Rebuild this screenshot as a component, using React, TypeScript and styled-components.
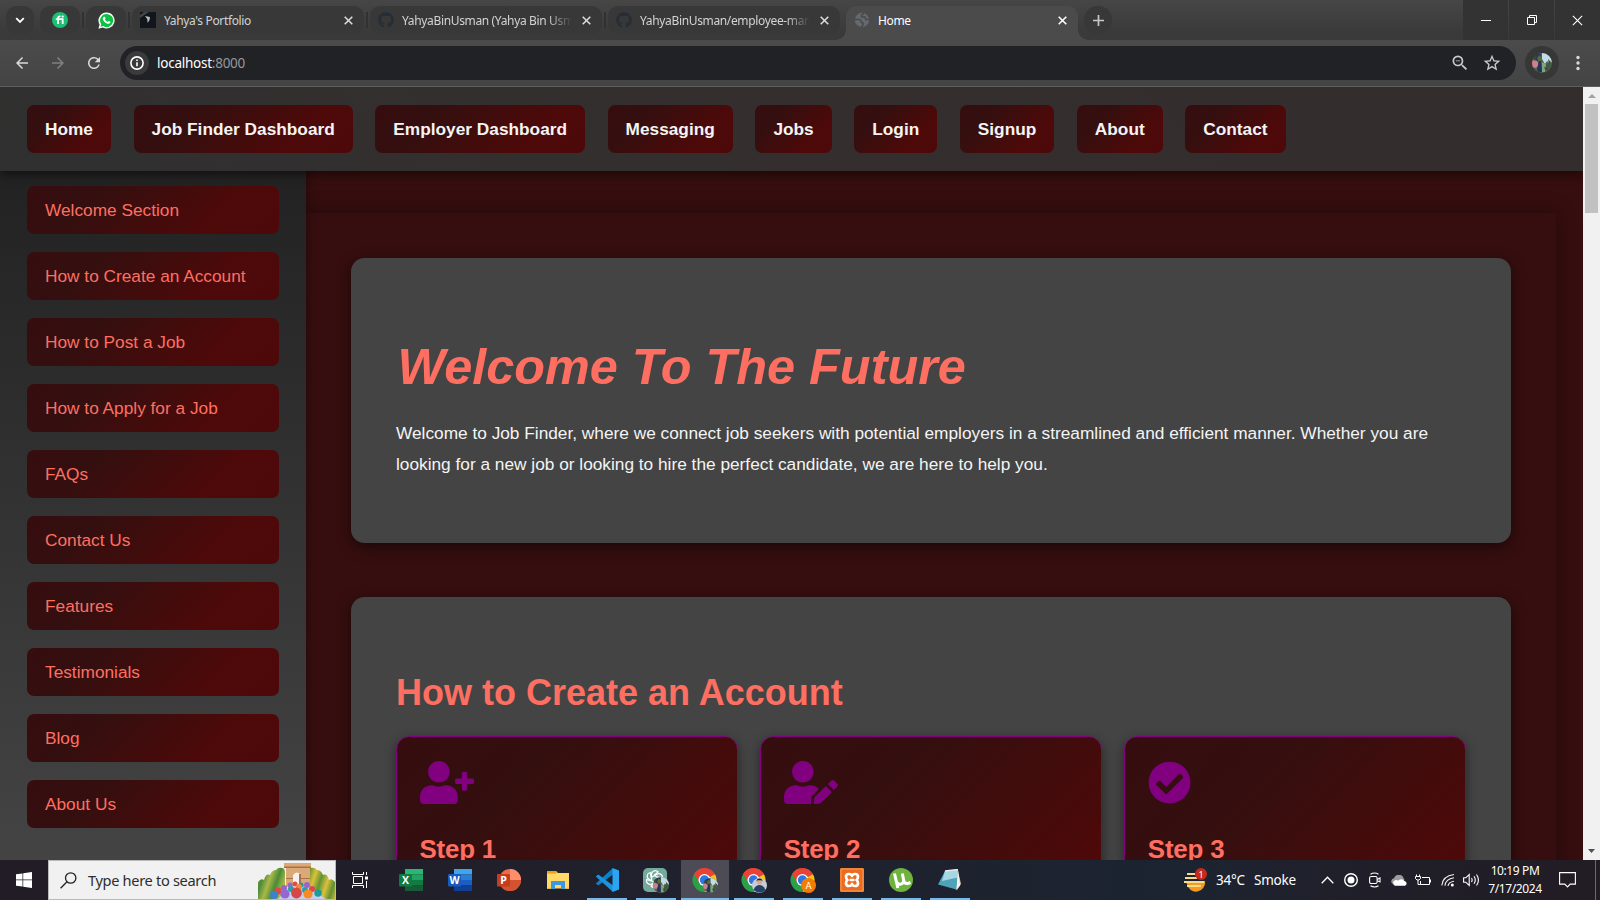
import React from "react";
import styled, { createGlobalStyle, css } from "styled-components";
import { FaUserPlus, FaUserEdit, FaCheckCircle, FaGithub } from "react-icons/fa";
import { MdOutlineStarBorder, MdRefresh, MdArrowBack, MdArrowForward, MdZoomOut } from "react-icons/md";

const ui = `"Noto Sans", "Open Sans", sans-serif`;
const page = `"Liberation Sans", Arial, sans-serif`;
const coral = "#ff6f61";
const maroon = "linear-gradient(135deg, #370d0f 0%, #340f0f 25%, #4e0909 74%, #4d090a 100%)";

const Global = createGlobalStyle`
  * { box-sizing: border-box; }
  body { margin: 0; background: #222; }
  svg { display: block; flex: none; }
`;

const Screen = styled.div`
  width: 1600px;
  height: 900px;
  overflow: hidden;
  display: flex;
  flex-direction: column;
`;

/* browser chrome */
const TabStrip = styled.div`
  height: 40px;
  flex: none;
  display: flex;
  align-items: flex-start;
  gap: 6px;
  padding: 6px 0 0 6px;
  background: linear-gradient(#464646, #3a3a3a 80%);
  font-family: ${ui};
`;
const Chip = styled.div<{ $w: number; $sep?: boolean; $round?: boolean }>`
  width: ${(p) => p.$w}px;
  height: 28px;
  border-radius: ${(p) => (p.$round ? 14 : 10)}px;
  background: #383838;
  display: flex;
  align-items: center;
  justify-content: center;
  position: relative;
  ${(p) => p.$sep && css`
    &::after {
      content: "";
      position: absolute;
      right: -4px;
      top: 6px;
      width: 2px;
      height: 16px;
      background: #313131;
    }
  `}
`;
const Tab = styled(Chip)<{ $active?: boolean }>`
  justify-content: flex-start;
  padding: 0 11.5px 0 8px;
  gap: 8px;
  ${(p) => p.$active && css`
    height: 34px;
    padding-bottom: 6px;
    background: #4b4b4b;
    border-radius: 10px 10px 0 0;
    &::before, &::after {
      content: "";
      position: absolute;
      bottom: 0;
      top: auto;
      width: 10px;
      height: 10px;
      background: radial-gradient(circle at 0 0, transparent 9.5px, #4b4b4b 10px);
      left: -10px;
    }
    &::after {
      left: auto;
      right: -10px;
      background: radial-gradient(circle at 100% 0, transparent 9.5px, #4b4b4b 10px);
    }
  `}
`;
const TabTitle = styled.span<{ $active?: boolean; $fade?: boolean }>`
  flex: 1;
  min-width: 0;
  overflow: hidden;
  white-space: nowrap;
  padding-top: 2px;
  font-size: 12px;
  line-height: 18px;
  letter-spacing: -0.35px;
  color: ${(p) => (p.$active ? "#fff" : "#d3d3d3")};
  margin-right: 2px;
  ${(p) => p.$fade && css`mask-image: linear-gradient(90deg, #000 86%, transparent);`}
`;
const WindowButtons = styled.div`
  display: flex;
  gap: 1px;
  margin: -6px 0 0 auto;
  height: 40px;
`;
const WindowButton = styled.div`
  width: 45px;
  background: #333;
  display: flex;
  align-items: center;
  justify-content: center;
`;
const Toolbar = styled.div`
  height: 47px;
  flex: none;
  display: flex;
  align-items: center;
  background: linear-gradient(#4b4b4b, #444);
  border-bottom: 1px solid #5e5e5e;
  color: #d5d5d5;
`;
const ToolButton = styled.div<{ $dim?: boolean }>`
  width: 36px;
  display: flex;
  justify-content: center;
  color: ${(p) => (p.$dim ? "#808080" : "#dadada")};
`;
const NavButtons = styled.div`
  display: flex;
  align-items: center;
  width: 120px;
  padding-left: 4px;
`;
const AddressBar = styled.div`
  width: 1396px;
  height: 34px;
  border-radius: 17px;
  background: #212226;
  display: flex;
  align-items: center;
  padding: 0 14px 0 5px;
  font-family: ${ui};
  font-size: 13.5px;
  color: #fff;
`;
const InfoBadge = styled.div`
  width: 24px;
  height: 24px;
  border-radius: 50%;
  background: #3a3a3b;
  display: flex;
  align-items: center;
  justify-content: center;
  margin-right: 8px;
`;
const Url = styled.span`
  flex: 1;
  letter-spacing: -0.25px;
  span { color: #96979a; }
`;
const AddressIcons = styled.div`
  display: flex;
  gap: 12px;
  color: #c9c9c9;
  align-items: center;
`;
const Profile = styled.div`
  width: 34px;
  height: 34px;
  margin: 0 9px 0 9px;
  border-radius: 50%;
  background: #373737;
  display: flex;
  align-items: center;
  justify-content: center;
`;

/* web page */
const Viewport = styled.div`
  height: 773px;
  flex: none;
  display: flex;
  overflow: hidden;
`;
const Page = styled.div`
  width: 1583px;
  overflow: hidden;
  background: #360e0f;
  font-family: ${page};
  font-size: 17.28px;
  display: flex;
  flex-direction: column;
`;
const Header = styled.nav`
  height: 84px;
  flex: none;
  display: flex;
  align-items: center;
  gap: 22.57px;
  padding-left: 27px;
  background: linear-gradient(45deg, #303030 0, #332f2e 35%, #332e2d);
  box-shadow: 0 4px 9px rgba(0, 0, 0, 0.45);
  position: relative;
  z-index: 2;
`;
const NavLink = styled.a`
  height: 48px;
  padding: 0 18px;
  border-radius: 7px;
  background: ${maroon};
  color: #f4f4f4;
  font-weight: bold;
  line-height: 48px;
  white-space: nowrap;
`;
const Columns = styled.div`
  flex: 1;
  min-height: 0;
  display: flex;
`;
const Sidebar = styled.aside`
  width: 306px;
  flex: none;
  display: flex;
  flex-direction: column;
  gap: 18px;
  padding: 15px 27px;
  background: linear-gradient(#222, #444);
  box-shadow: 2px 0 9px rgba(0, 0, 0, 0.3);
  position: relative;
  z-index: 1;
`;
const SideLink = styled.a`
  height: 48px;
  flex: none;
  padding-left: 18px;
  border-radius: 7px;
  background: ${maroon};
  color: ${coral};
  line-height: 48px;
`;
const Main = styled.main`
  width: 1250px;
  height: 1000px;
  margin-top: 42px;
  padding: 45px;
  display: flex;
  flex-direction: column;
  gap: 54px;
  box-shadow: 0 0 18px rgba(0, 0, 0, 0.4);
  background: #360e0f;
`;
const Section = styled.section<{ $h: number }>`
  height: ${(p) => p.$h}px;
  flex: none;
  border-radius: 13.5px;
  background: #444;
  padding: 0 45px;
  box-shadow: 0 4px 14px rgba(0, 0, 0, 0.5);
`;
const Hero = styled.h1`
  margin: 0;
  padding: 80px 0 0 1.5px;
  font-size: 50.4px;
  line-height: 58px;
  font-style: italic;
  color: ${coral};
`;
const Lead = styled.p`
  margin: 22px 0 0;
  line-height: 31.1px;
  color: #f4f4f4;
`;
const Title = styled.h2`
  margin: 0;
  padding-top: 75px;
  font-size: 36px;
  line-height: 41px;
  color: ${coral};
`;
const Steps = styled.div`
  display: grid;
  grid-template-columns: repeat(3, 1fr);
  gap: 22.5px;
  margin-top: 23px;
`;
const Card = styled.div`
  height: 250px;
  border: 1px solid purple;
  border-radius: 13.5px;
  padding: 24px 22.5px;
  background: linear-gradient(135deg, #360d0f, #340f0f 28%, #4e0909 78%);
  box-shadow: 0 4px 12px rgba(0, 0, 0, 0.45);
  color: purple;
`;
const StepIcon = styled.div<{ $w: number }>`
  svg {
    width: ${(p) => p.$w}px;
    height: 43.2px;
  }
`;
const StepTitle = styled.h3`
  margin: 29.5px 0 0;
  font-size: 25.92px;
  line-height: 30px;
  letter-spacing: -0.2px;
  color: ${coral};
`;
const Scrollbar = styled.div`
  width: 17px;
  background: #f1f1f1;
  display: flex;
  flex-direction: column;
  align-items: center;
  padding-bottom: 5px;
`;
const Arrow = styled.div<{ $down?: boolean }>`
  height: 17px;
  display: flex;
  align-items: center;
  color: ${(p) => (p.$down ? "#505050" : "#a3a3a3")};
  ${(p) => p.$down && "margin-top: auto; height: 8px;"}
`;
const Thumb = styled.div`
  width: 13px;
  height: 109px;
  background: #c1c1c1;
`;

/* desktop taskbar */
const Taskbar = styled.div`
  height: 40px;
  flex: none;
  display: flex;
  align-items: center;
  background: linear-gradient(90deg, #211c25, #20202b 35%, #1e222f 60%, #1c2431 74%, #201f29 85%, #221c24);
  font-family: ${ui};
  color: #fff;
`;
const StartButton = styled.div`
  width: 48px;
  display: flex;
  justify-content: center;
`;
const SearchBox = styled.div`
  width: 288px;
  height: 40px;
  background: #f1f1f1;
  border: 1px solid #b9b9b9;
  display: flex;
  align-items: center;
  padding-left: 11px;
  color: #2d2d2d;
  font-size: 14.6px;
`;
const SearchText = styled.span`
  margin-left: 11px;
  flex: 1;
  letter-spacing: -0.33px;
  white-space: nowrap;
`;
const TaskView = styled.div`
  width: 50px;
  padding-right: 1px;
  display: flex;
  justify-content: center;
`;
const AppButton = styled.div<{ $running?: boolean; $active?: boolean }>`
  width: 49px;
  height: 40px;
  flex: none;
  display: flex;
  align-items: center;
  justify-content: center;
  background: ${(p) => (p.$active ? "linear-gradient(90deg, transparent 1px, #4c4b56 1px)" : "none")};
  position: relative;
  ${(p) => p.$running && css`
    &::after {
      content: "";
      position: absolute;
      left: ${p.$active ? 1 : 5}px;
      right: ${p.$active ? 0 : 4}px;
      bottom: 0;
      height: 2px;
      background: #76b9ed;
    }
  `}
`;
const Tray = styled.div`
  margin-left: auto;
  display: flex;
  align-items: center;
  height: 40px;
`;
const Weather = styled.div`
  display: flex;
  align-items: center;
  width: 132px;
  font-size: 13.5px;
  letter-spacing: -0.2px;
  white-space: nowrap;
  span { margin-left: 9px; }
`;
const TrayIcon = styled.div<{ $w?: number }>`
  width: ${(p) => p.$w ?? 24}px;
  display: flex;
  justify-content: center;
`;
const Clock = styled.div`
  width: 64px;
  text-align: center;
  font-size: 12px;
  line-height: 18px;
  letter-spacing: -0.4px;
  white-space: nowrap;
`;
const Notify = styled.div`
  width: 40px;
  display: flex;
  justify-content: center;
`;
const ShowDesktop = styled.div`
  width: 5px;
  height: 40px;
  border-left: 1px solid #6d6a72;
  margin-left: 8px;
`;

const Cross = ({ c = "#dcdcdc", s = 9 }: { c?: string; s?: number }) => (
  <svg width={s} height={s} viewBox="0 0 9 9" stroke={c} strokeWidth={s > 9 ? 0.9 : 1.55}><path d="M.7.7l7.6 7.6M8.3.7L.7 8.3" /></svg>
);

const Photo = ({ s }: { s: number }) => (
  <svg width={s} height={s} viewBox="0 0 20 20">
    <defs><clipPath id="face"><circle cx="10" cy="10" r="10" /></clipPath></defs>
    <g clipPath="url(#face)">
      <rect width="20" height="20" fill="#4c6350" />
      <path d="M10 0h5l5 4v5l-3 1-2-2-2 3-3-5z" fill="#c4dbe8" />
      <path d="M3 1h6l-1 5-3 2-3-3z" fill="#27355f" /><path d="M7 2l3 3-2 4-3-3z" fill="#5a6d35" />
      <path d="M0 7l5 1 2 4-3 3-4-1z" fill="#cf7f90" /><path d="M7 8h2l1 11H6l-1-3z" fill="#26345a" />
      <path d="M10 9l4 2-1 8h-3z" fill="#86a181" /><path d="M14 11l5 1-3 6-2-1z" fill="#405a40" />
      <path d="M1 4l3-2 1 3-3 2zM12 14l3 1-1 3zM16 6l3 3-2 3z" fill="#39492f" />
    </g>
  </svg>
);

const OfficeIcon = ({ tones, box, letter }: { tones: string[]; box: string; letter: string }) => (
  <svg width="24" height="24" viewBox="0 0 24 24">
    {tones.map((t, i) => <rect key={t} x="6" y={1 + i * 5.5} width="18" height="5.5" fill={t} />)}
    <rect x="0" y="6" width="13" height="12.5" rx="1" fill={box} />
    <text x="6.5" y="16" fontSize="10.5" fontWeight="bold" fontFamily="Open Sans, sans-serif" textAnchor="middle" fill="#fff">{letter}</text>
  </svg>
);

const Chrome = ({ children }: { children?: React.ReactNode }) => (
  <svg width="28" height="28" viewBox="0 0 28 28">
    <path d="M13.5 14L3.1 8A12 12 0 0 1 23.9 8z" fill="#ea4335" />
    <path d="M13.5 14L23.9 8A12 12 0 0 1 13.5 26z" fill="#fbc116" />
    <path d="M13.5 14v12A12 12 0 0 1 3.1 8z" fill="#2aa149" />
    <path d="M13.5 8.5H24a12 12 0 0 0-20.9-.5l5.5 9z" fill="#ea4335" />
    <circle cx="13.5" cy="14" r="6" fill="#fff" /><circle cx="13.5" cy="14" r="4.7" fill="#2d76e8" />
    {children}
  </svg>
);

const Doodle = () => {
  const balls: [number, number, number, string][] = [
    [32, 24, 2.5, "#9a63cf"], [37, 23, 2.5, "#e04a4e"], [43, 24, 2.5, "#2199a0"], [49, 24, 3, "#9765cf"],
    [26, 27, 3, "#9765cf"], [33, 28, 3, "#28a0a3"], [41, 26, 3, "#f58b31"], [54, 28, 3, "#dc484c"], [47, 29, 3, "#28a0a3"],
    [20, 30, 3.4, "#dc484c"], [16, 34, 4, "#3a82cf"], [27, 33, 4.6, "#9169d1"], [38.5, 32, 5.4, "#d84747"], [50, 33, 4.6, "#f88a22"], [60, 32, 3.7, "#1c9b9a"],
  ];
  return (
    <svg width="77" height="38" viewBox="0 0 77 38">
      <defs>
        <linearGradient id="tree" x2=".25" y2=".1" spreadMethod="reflect"><stop stopColor="#a9b84a" /><stop offset="1" stopColor="#4a8a36" /></linearGradient>
        <linearGradient id="treeR" x2=".25" y2=".1" spreadMethod="reflect"><stop stopColor="#5f9233" /><stop offset="1" stopColor="#dcc03b" /></linearGradient>
      </defs>
      <path d="M0 38V21q3-4 6-2 2-7 6-5 2-5 6-5 2-3 6-2 3 0 3 5v26z" fill="url(#tree)" />
      <path d="M77 38V21q-3-4-6-2-2-7-6-5-2-5-6-5-2-3-7-2v31z" fill="url(#treeR)" />
      <path d="M20 38l12-14h16l20 14z" fill="#c9cde8" />
      <path d="M26 2h27v4H26zM28 6h24v20H28z" fill="#dba878" /><path d="M35 26V14q4-5 8 0v12z" fill="#f1f1f1" /><path d="M26 5.5h27V7H26zM41 13h2v13h-2zM28 17h7v1h-7zM43 17h9v1h-9z" fill="#a97245" />
      {balls.map(([x, y, r, c]) => <circle key={`${x}-${y}`} cx={x} cy={y} r={r} fill={c} />)}
    </svg>
  );
};

const navItems = ["Home", "Job Finder Dashboard", "Employer Dashboard", "Messaging", "Jobs", "Login", "Signup", "About", "Contact"];
const sideItems = ["Welcome Section", "How to Create an Account", "How to Post a Job", "How to Apply for a Job", "FAQs", "Contact Us", "Features", "Testimonials", "Blog", "About Us"];
const steps = [
  { Icon: FaUserPlus, w: 54 },
  { Icon: FaUserEdit, w: 54 },
  { Icon: FaCheckCircle, w: 43.2 },
];

function BrowserTabs() {
  return (
    <TabStrip>
      <Chip $w={28}><svg width="10" height="7" viewBox="0 0 10 7" fill="none" stroke="#fff" strokeWidth="1.8"><path d="M1.2 1.2L5 5l3.8-3.8" /></svg></Chip>
      <Chip $w={40} $sep>
        <svg width="16" height="16" viewBox="0 0 16 16">
          <circle cx="8" cy="8" r="8" fill="#1dbf73" />
          <path d="M3.8 7.2h6.9V12M6 12V6.2Q6 4.2 8.5 4.4" fill="none" stroke="#fff" strokeWidth="1.8" /><circle cx="10.7" cy="4.6" r="1.1" fill="#fff" />
        </svg>
      </Chip>
      <Chip $w={40} $sep>
        <svg width="17" height="17" viewBox="0 0 17 17">
          <path d="M8.7.5a8 8 0 1 1-4 15L.4 16.7l1.2-4.2A8 8 0 0 1 8.7.5z" fill="#fff" />
          <path d="M8.7 1.9a6.6 6.6 0 1 1-3.6 12.2l-2.7.7.8-2.6A6.6 6.6 0 0 1 8.7 1.9z" fill="#0cc243" />
          <path d="M6.2 4.8c.6-.3.9 0 1.3 1.5.1.5-.5.8-.5 1.1.6 1.2 1.5 1.9 2.7 2.4.4 0 .7-.9 1.1-.8l1.6.8c.2 1.2-.8 2-2 2-2.600-.2-5.600-3.100-5.600-5.100 0-.9.5-1.600 1.400-1.900z" fill="#fff" />
        </svg>
      </Chip>
      <Tab $w={232} $sep>
        <svg width="16" height="16" viewBox="0 0 16 16"><rect width="16" height="16" fill="#10161b" /><path d="M0 6L9 0H4L0 3z" fill="#3e474d" /><path d="M5 4l5 1-.5 3-1.8 3-.5-4z" fill="#b9bcbe" /></svg>
        <TabTitle>Yahya's Portfolio</TabTitle><Cross />
      </Tab>
      <Tab $w={232} $sep><FaGithub size={16} color="#252e36" /><TabTitle $fade>YahyaBinUsman (Yahya Bin Usman)</TabTitle><Cross /></Tab>
      <Tab $w={232}><FaGithub size={16} color="#252e36" /><TabTitle $fade>YahyaBinUsman/employee-management</TabTitle><Cross /></Tab>
      <Tab $w={232} $active>
        <svg width="16" height="16" viewBox="0 0 16 16"><circle cx="8" cy="8" r="7.2" fill="#65686d" /><path d="M1 7.5h4q2 .2 2 1.800t2 1.700v2l-1.800 2.200M10 1.500L7.500 3v2h3.500l1 2.500h3" fill="none" stroke="#47494c" strokeWidth="1.5" /></svg>
        <TabTitle $active>Home</TabTitle><Cross c="#fff" />
      </Tab>
      <Chip $w={28} $round><svg width="11" height="11" viewBox="0 0 11 11" stroke="#c6c6c6" strokeWidth="1.7"><path d="M5.5 0v11M0 5.5h11" /></svg></Chip>
      <WindowButtons>
        <WindowButton><svg width="10" height="10"><rect y="5" width="10" height="1" fill="#fff" /></svg></WindowButton>
        <WindowButton><svg width="10" height="10" fill="none" stroke="#fff"><path d="M.5 2.5h7v7h-7zM2.5 2.5v-2h7v7h-2" /></svg></WindowButton>
        <WindowButton><Cross c="#fff" s={11} /></WindowButton>
      </WindowButtons>
    </TabStrip>
  );
}

function BrowserToolbar() {
  return (
    <Toolbar>
      <NavButtons>
        <ToolButton><MdArrowBack size={18} /></ToolButton>
        <ToolButton $dim><MdArrowForward size={18} /></ToolButton>
        <ToolButton><MdRefresh size={18} /></ToolButton>
      </NavButtons>
      <AddressBar>
        <InfoBadge><svg width="14" height="14" viewBox="0 0 14 14"><circle cx="7" cy="7" r="6.1" fill="none" stroke="#fff" strokeWidth="1.6" /><path d="M7 6.2v4M7 3.5v1.5" stroke="#fff" strokeWidth="1.6" /></svg></InfoBadge>
        <Url>localhost<span>:8000</span></Url>
        <AddressIcons><MdZoomOut size={20} /><MdOutlineStarBorder size={20} /></AddressIcons>
      </AddressBar>
      <Profile><Photo s={20} /></Profile>
      <svg width="20" height="20"><g fill="#dadada"><circle cx="10" cy="4.5" r="1.7" /><circle cx="10" cy="10" r="1.7" /><circle cx="10" cy="15.5" r="1.7" /></g></svg>
    </Toolbar>
  );
}

function JobFinderPage() {
  return (
    <Page>
      <Header>{navItems.map((n) => <NavLink key={n}>{n}</NavLink>)}</Header>
      <Columns>
        <Sidebar>{sideItems.map((n) => <SideLink key={n}>{n}</SideLink>)}</Sidebar>
        <Main>
          <Section $h={285}>
            <Hero>Welcome To The Future</Hero>
            <Lead>Welcome to Job Finder, where we connect job seekers with potential employers in a streamlined and efficient manner. Whether you are looking for a new job or looking to hire the perfect candidate, we are here to help you.</Lead>
          </Section>
          <Section $h={500}>
            <Title>How to Create an Account</Title>
            <Steps>
              {steps.map(({ Icon, w }, i) => (
                <Card key={i}>
                  <StepIcon $w={w}><Icon /></StepIcon>
                  <StepTitle>Step {i + 1}</StepTitle>
                </Card>
              ))}
            </Steps>
          </Section>
        </Main>
      </Columns>
    </Page>
  );
}

function WindowsTaskbar() {
  return (
    <Taskbar>
      <StartButton><svg width="16" height="16" viewBox="0 0 16 16" fill="#fff"><path d="M0 2.3l6.5-.9v6.2H0zM7.2 1.3L16 0v7.6H7.2zM0 8.3h6.5v6.3L0 13.7zM7.2 8.3H16V16l-8.8-1.3z" /></svg></StartButton>
      <SearchBox>
        <svg width="17" height="17" viewBox="0 0 17 17" fill="none" stroke="#222" strokeWidth="1.3"><circle cx="10.7" cy="6" r="5.2" /><path d="M7 9.8L.6 16.2" /></svg>
        <SearchText>Type here to search</SearchText>
        <Doodle />
      </SearchBox>
      <TaskView><svg width="17" height="16" viewBox="0 0 17 16" fill="none" stroke="#fff"><path d="M1.5 4.5h9v7h-9zM.5 0v2.5h11V0M.5 16v-2.5h11V16M14.5 0v3M14.5 9v7" /><rect x="13" y="4.5" width="3" height="3" fill="#fff" stroke="none" /></svg></TaskView>
      <AppButton><OfficeIcon tones={["#2ab673", "#21a366", "#107c41", "#185c37"]} box="#107c41" letter="X" /></AppButton>
      <AppButton><OfficeIcon tones={["#41a5ee", "#2b7cd3", "#1b5fc4", "#103f91"]} box="#185abd" letter="W" /></AppButton>
      <AppButton>
        <svg width="24" height="24" viewBox="0 0 24 24"><circle cx="13" cy="12" r="11" fill="#ed6c47" /><path d="M13 1a11 11 0 0 1 11 11H13z" fill="#ff8f6b" /><path d="M2 12h22a11 11 0 0 1-22 0z" fill="#d35230" /><rect y="6" width="13" height="12.5" rx="1" fill="#c43e1c" /><text x="6.5" y="16" fontSize="10.5" fontWeight="bold" fontFamily="Open Sans, sans-serif" textAnchor="middle" fill="#fff">P</text></svg>
      </AppButton>
      <AppButton>
        <svg width="22" height="20" viewBox="0 0 22 20"><path d="M0 1h9l2 2h11v15.5H0z" fill="#ffd867" /><path d="M0 1h9l1 2.5H0z" fill="#e8a317" /><path d="M4 19v-8h14v8h-4v-4H8v4z" fill="#3f97e0" /><path d="M0 18h4v1H0zM18 18h4v1h-4z" fill="#e9b63d" /></svg>
      </AppButton>
      <AppButton $running>
        <svg width="24" height="24" viewBox="0 0 24 24"><path d="M18 0L.8 15.5l2.5 2L18 6.5z" fill="#0f7fc9" /><path d="M18 24L.8 8.5l2.5-2L18 17.5z" fill="#1c93de" /><path d="M17.5 0L24 2.5v19L17.5 24z" fill="#2aa5f2" /></svg>
      </AppButton>
      <AppButton $running>
        <svg width="26" height="26" viewBox="0 0 26 26"><rect x="0" y="1" width="24" height="24" rx="5" fill="#74aa9c" />
          <g fill="none" stroke="#fff" strokeWidth="1.2" transform="translate(11.5 12)">
            {[0, 60, 120, 180, 240, 300].map((a) => <path key={a} transform={`rotate(${a})`} d="M-3 1.7V-4.5a3.7 3.7 0 0 1 6.5-2.5L-.5-3.5" />)}
          </g>
          <svg x="10" y="10" width="16" height="16"><Photo s={16} /></svg>
        </svg>
      </AppButton>
      <AppButton $running $active><Chrome><svg x="12" y="12" width="15" height="15"><Photo s={15} /></svg></Chrome></AppButton>
      <AppButton $running><Chrome><circle cx="19.5" cy="19.5" r="7.5" fill="#c8cdd4" /><path d="M13.5 24q2-5 6-5t6 5q-5 5.5-12 0z" fill="#25406c" /><circle cx="19.5" cy="15.8" r="2.7" fill="#d9a98b" /><path d="M16.5 15.5q0-3 3-3t3 3l-1-1.3h-4z" fill="#222" /></Chrome></AppButton>
      <AppButton $running><Chrome><circle cx="19.5" cy="19.5" r="7.5" fill="#f57c00" /><text x="19.5" y="23" fontSize="9.5" fontFamily="Roboto, sans-serif" fill="#fff" textAnchor="middle">A</text></Chrome></AppButton>
      <AppButton $running>
        <svg width="24" height="24" viewBox="0 0 24 24"><rect width="24" height="24" rx="1.5" fill="#ea6c1f" /><rect x="1" y="1" width="22" height="22" fill="none" stroke="#f89b57" /><path d="M9 6q2.5 0 3 2 .5-2 3-2 3 0 3 2.8 0 2.2-1.500 3.200 1.500 1 1.500 3.200Q18 18 15 18q-2.500 0-3-2-.5 2-3 2-3 0-3-2.800 0-2.200 1.500-3.200Q6 11 6 8.800 6 6 9 6zM9.500 12h5" fill="none" stroke="#fff" strokeWidth="2.7" strokeLinejoin="round" /></svg>
      </AppButton>
      <AppButton $running>
        <svg width="24" height="24" viewBox="0 0 24 24"><circle cx="12" cy="12" r="12" fill="#6fb33f" /><path d="M5.5 5.5l3.3 14.5M7 12.5q1 4.3 4.5 3.8 4-.7 2.8-6L13.3 5.5M14.5 12q.8 4.2 4.5 3.5l2.5-1" fill="none" stroke="#fff" strokeWidth="3" /></svg>
      </AppButton>
      <AppButton $running>
        <svg width="24" height="22" viewBox="0 0 24 22"><path d="M20 2l3 13-4 6-5-3z" fill="#d9c79a" /><path d="M7 2L20 .5l-1.500 20L0 15.500z" fill="#4fa3b8" /><path d="M7 2L20 .5l-.5 8L4 12z" fill="#a5d8e4" /><path d="M20 1l-1.500 19.500 3.500-4z" fill="#f3f3f3" /><path d="M7 2L20 .5" stroke="#e9e9e9" strokeWidth="1.5" /></svg>
      </AppButton>
      <Tray>
        <Weather>
          <svg width="24" height="24" viewBox="0 0 24 24"><path d="M2 13h20a9 9 0 0 1-18 3z" fill="#f39a1f" /><path d="M4 6h8M2 10h12M1 14h20M4 18h14" stroke="#fbd98a" strokeWidth="1.8" /><circle cx="18" cy="6" r="6" fill="#c42b1c" /><text x="18" y="9.5" fontSize="9" fontFamily="Noto Sans, sans-serif" fill="#fff" textAnchor="middle">1</text></svg>
          <span>34°C</span><span>Smoke</span>
        </Weather>
        <TrayIcon><svg width="13" height="8" viewBox="0 0 13 8" fill="none" stroke="#fff" strokeWidth="1.3"><path d="M.7 7.2l5.800-6 5.800 6" /></svg></TrayIcon>
        <TrayIcon><svg width="14" height="14" viewBox="0 0 14 14"><circle cx="7" cy="7" r="6.3" fill="none" stroke="#fff" strokeWidth="1.4" /><circle cx="7" cy="7" r="3.5" fill="#fff" /></svg></TrayIcon>
        <TrayIcon><svg width="12" height="16" viewBox="0 0 12 16" fill="none" stroke="#fff" strokeWidth="1.1"><rect x=".6" y="4.5" width="7.5" height="7" rx="1.5" /><path d="M8.2 7.5L11 6v4L8.2 8.8M1.5 2.2q4-2.500 8 0M1.500 13.800q4 2.500 8 0" /></svg></TrayIcon>
        <TrayIcon><svg width="17" height="11" viewBox="0 0 17 11"><path d="M2 9a3 3 0 0 1 1-5.700A5 5 0 0 1 12.500 3l1 2-8 5z" fill="#9b9ba0" /><path d="M4 10.800a3 3 0 0 1 0-5.500q2-.5 3 .4a4 4 0 0 1 6.500.3 2.500 2.500 0 0 1 .5 4.800z" fill="#fff" /></svg></TrayIcon>
        <TrayIcon $w={25}><svg width="17" height="12" viewBox="0 0 17 12" fill="none" stroke="#fff"><path d="M7 3.500h7.500v7H5.500V7M15.500 5.500v3M1.500.5v2M4.500.5v2M.5 2.500h5v2L4 6H2L.5 4.500zM3 6v4.500h2.500" /></svg></TrayIcon>
        <TrayIcon><svg width="14" height="14" viewBox="0 0 14 14" fill="none" stroke="#eee" strokeWidth="1.1"><path d="M.8 12.500Q1.500 3 13 1.500M4 12.800Q4.500 6 13 4.800M7 13Q7.500 9 13 8.200" /><circle cx="11.3" cy="12" r="1.5" fill="#fff" stroke="none" /></svg></TrayIcon>
        <TrayIcon $w={23}><svg width="17" height="14" viewBox="0 0 17 14" fill="none" stroke="#fff" strokeWidth="1.1"><path d="M.6 4.800h2.200L6.200 1.500v11L2.800 9.200H.6zM8.500 5q1.300 2 0 4M11 3.200q2.600 3.800 0 7.600M13.500 1.500q3.900 5.500 0 11" /></svg></TrayIcon>
        <Clock>10:19 PM<br />7/17/2024</Clock>
        <Notify><svg width="17" height="16" viewBox="0 0 17 16" fill="none" stroke="#fff" strokeWidth="1.1"><path d="M.6.6h15.800v11.500h-5.200L8.500 14.900l-2.700-2.800H.6z" /></svg></Notify>
        <ShowDesktop />
      </Tray>
    </Taskbar>
  );
}

export default function App() {
  return (
    <Screen>
      <Global />
      <BrowserTabs />
      <BrowserToolbar />
      <Viewport>
        <JobFinderPage />
        <Scrollbar>
          <Arrow><svg width="8" height="4"><path d="M0 4l4-4 4 4z" fill="currentColor" /></svg></Arrow>
          <Thumb />
          <Arrow $down><svg width="7" height="4"><path d="M0 0h7l-3.5 4z" fill="currentColor" /></svg></Arrow>
        </Scrollbar>
      </Viewport>
      <WindowsTaskbar />
    </Screen>
  );
}
